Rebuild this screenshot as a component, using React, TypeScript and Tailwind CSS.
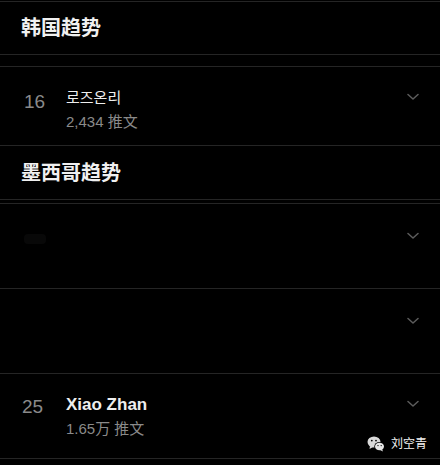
import React from "react";

const Chevron = () => (
  <svg width="12" height="8" viewBox="0 0 12 8" fill="none">
    <path d="M1 1.5 L6 6 L11 1.5" stroke="#5c5c5c" strokeWidth="1.5" strokeLinecap="round" strokeLinejoin="round" />
  </svg>
);

const Line = () => <div className="h-px bg-[#252525]" />;

const WeChat = () => (
  <svg width="18" height="16" viewBox="0 0 18 16">
    <ellipse cx="7" cy="6" rx="6.5" ry="5.5" fill="#d9d9d9" />
    <path d="M3 10 L2.5 13 L6 11 Z" fill="#d9d9d9" />
    <circle cx="4.8" cy="4.6" r="0.9" fill="#000" />
    <circle cx="9" cy="4.6" r="0.9" fill="#000" />
    <ellipse cx="12.5" cy="10.5" rx="5.2" ry="4.5" fill="#000" />
    <ellipse cx="12.5" cy="10.5" rx="4.5" ry="3.8" fill="#e6e6e6" />
    <path d="M15 13 L16 15.5 L13 14 Z" fill="#e6e6e6" />
    <circle cx="11" cy="9.6" r="0.7" fill="#000" />
    <circle cx="14.2" cy="9.6" r="0.7" fill="#000" />
  </svg>
);

export default function App() {
  const font = "font-['Liberation_Sans','Noto_Sans_CJK_SC',sans-serif]";
  return (
    <div className={`relative w-[440px] h-[465px] bg-black overflow-hidden ${font}`}>
      <div className="h-px" />
      <Line />
      {/* header 1 */}
      <div className="h-[52px] flex items-center pl-[21px]">
        <span className="text-[20px] font-bold text-[#f0f0f0] leading-none">韩国趋势</span>
      </div>
      <Line />
      <div className="h-[11px]" />
      <Line />
      {/* item 16 */}
      <div className="h-[78px] flex items-start pt-[20px] pr-[21px]">
        <div className="w-[66px] pl-[24px] pt-[3px] text-[19px] leading-[24px] text-[#8a8a8a] font-['Liberation_Sans',sans-serif]">16</div>
        <div className="flex-1 flex flex-col">
          <span className="text-[15px] leading-[20px] text-[#eeeeee] font-['Noto_Sans_CJK_KR',sans-serif]">로즈온리</span>
          <span className="mt-[5px] text-[15px] leading-[20px] text-[#8a8a8a]">2,434 推文</span>
        </div>
        <div className="pt-[6px]"><Chevron /></div>
      </div>
      <Line />
      {/* header 2 */}
      <div className="h-[53px] flex items-center pl-[21px]">
        <span className="text-[20px] font-bold text-[#f0f0f0] leading-none">墨西哥趋势</span>
      </div>
      <Line />
      <div className="h-[3px]" />
      <Line />
      {/* blank item */}
      <div className="h-[84px] flex items-start pt-[24px] pr-[21px]">
        <div className="w-[66px] pl-[24px] pt-[6px]">
          <div className="w-[22px] h-[10px] rounded bg-[#080808]" />
        </div>
        <div className="flex-1" />
        <div className="pt-[4px]"><Chevron /></div>
      </div>
      <Line />
      <div className="h-[84px] flex items-start pt-[25px] pr-[21px]">
        <div className="flex-1" />
        <div className="pt-[3px]"><Chevron /></div>
      </div>
      <Line />
      {/* item 25 */}
      <div className="h-[84px] flex items-start pt-[20px] pr-[21px]">
        <div className="w-[66px] pl-[22px] pt-[1px] text-[19px] leading-[24px] text-[#8a8a8a] font-['Liberation_Sans',sans-serif]">25</div>
        <div className="flex-1 flex flex-col">
          <span className="text-[17px] leading-[22px] font-bold text-[#eeeeee]">Xiao Zhan</span>
          <span className="mt-[3px] text-[15px] leading-[20px] text-[#8a8a8a]">1.65万 推文</span>
        </div>
        <div className="pt-[6px]"><Chevron /></div>
      </div>
      <Line />
      {/* watermark */}
      <div className="absolute right-[13px] bottom-[13px] flex items-center gap-[6px]">
        <WeChat />
        <span className="text-[12px] leading-none text-[#f2f2f2]">刘空青</span>
      </div>
    </div>
  );
}
